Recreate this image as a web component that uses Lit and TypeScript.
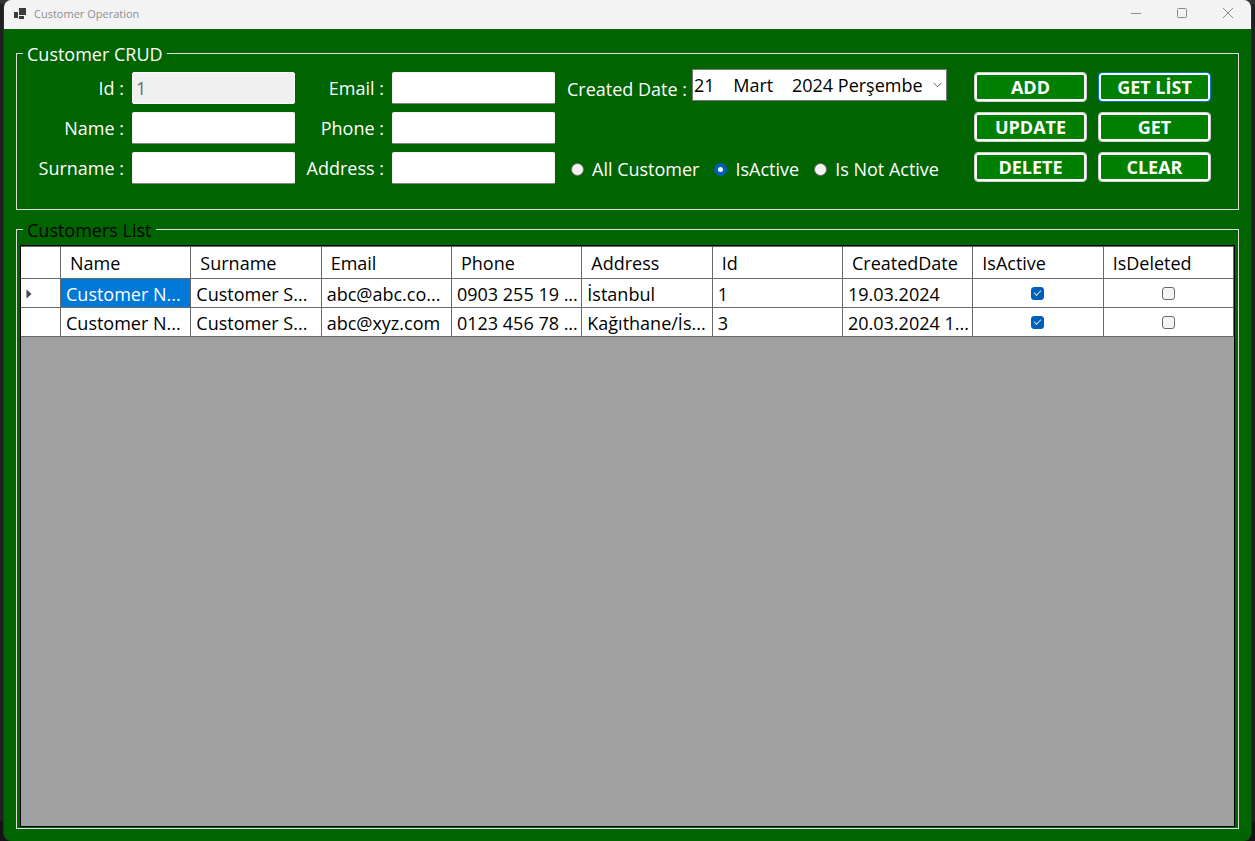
import { LitElement, html, css, svg } from "lit";
import { customElement, state } from "lit/decorators.js";

interface Customer {
  name: string;
  surname: string;
  email: string;
  phone: string;
  address: string;
  id: string;
  createdDate: string;
  isActive: boolean;
  isDeleted: boolean;
}

const TEXT_COLUMNS: Array<[keyof Customer, string]> = [
  ["name", "Name"],
  ["surname", "Surname"],
  ["email", "Email"],
  ["phone", "Phone"],
  ["address", "Address"],
  ["id", "Id"],
  ["createdDate", "CreatedDate"],
];

const FLAG_COLUMNS: Array<[keyof Customer, string]> = [
  ["isActive", "IsActive"],
  ["isDeleted", "IsDeleted"],
];

const CUSTOMERS: Customer[] = [
  {
    name: "Customer N...",
    surname: "Customer S...",
    email: "abc@abc.co...",
    phone: "0903 255 19 ...",
    address: "İstanbul",
    id: "1",
    createdDate: "19.03.2024",
    isActive: true,
    isDeleted: false,
  },
  {
    name: "Customer N...",
    surname: "Customer S...",
    email: "abc@xyz.com",
    phone: "0123 456 78 ...",
    address: "Kağıthane/İs...",
    id: "3",
    createdDate: "20.03.2024 1...",
    isActive: true,
    isDeleted: false,
  },
];

const ACTIONS = ["ADD", "GET LİST", "UPDATE", "GET", "DELETE", "CLEAR"];

const FIELDS = [
  { id: "id", label: "Id :", value: "1", disabled: true },
  { id: "email", label: "Email :", value: "", disabled: false },
  { id: "name", label: "Name :", value: "", disabled: false },
  { id: "phone", label: "Phone :", value: "", disabled: false },
  { id: "surname", label: "Surname :", value: "", disabled: false },
  { id: "address", label: "Address :", value: "", disabled: false },
];

const FILTERS = ["All Customer", "IsActive", "Is Not Active"];

@customElement("app-root")
export class AppRoot extends LitElement {
  @state() private filter = "IsActive";

  static styles = css`
    :host {
      display: block;
      font-family: "Open Sans", "Noto Sans", sans-serif;
      font-size: 18px;
      line-height: 24px;
      color: #fff;
    }
    * {
      box-sizing: border-box;
    }
    .desktop {
      min-height: 100vh;
      display: flex;
      padding: 0 3px;
      background: linear-gradient(#333 4px, #1f1f24 4px, #1f1f24 calc(100% - 20px), #141416 calc(100% - 20px));
    }
    .window {
      flex: 1;
      min-width: 0;
      display: flex;
      flex-direction: column;
      border: solid #2c2c2c;
      border-width: 0 1px;
      border-radius: 8px;
      overflow: hidden;
      background: #006400;
    }
    .titlebar {
      display: flex;
      align-items: center;
      height: 29px;
      padding: 0 13px 0 10px;
      gap: 8px;
      background: #f3f3f3;
      color: #8e8e8e;
      font-size: 11px;
      line-height: 26px;
    }
    .titlebar svg {
      display: block;
    }
    .title {
      flex: 1;
      margin: 0;
      font: inherit;
      padding-bottom: 2px;
    }
    .caption {
      display: flex;
      gap: 26px;
      padding-bottom: 3px;
    }
    .caption button {
      border: 0;
      padding: 0;
      background: none;
      width: 20px;
      height: 20px;
      display: grid;
      place-items: center;
    }
    .body {
      flex: 1;
      display: flex;
      flex-direction: column;
      gap: 7px;
      padding: 12px;
    }
    fieldset {
      margin: 0;
      min-width: 0;
      border: 1px solid #dcdcdc;
      padding: 0;
    }
    legend {
      margin-left: 6px;
      padding: 1px 4px 0;
      line-height: 24px;
    }
    .crud {
      display: flex;
      padding: 3px 27px 25px 0;
      align-items: flex-start;
    }
    .fields {
      flex: 1;
      display: grid;
      grid-template-columns: 107px minmax(0, 1fr) 81px minmax(0, 1fr);
      gap: 8px;
      align-items: center;
      padding-top: 3px;
    }
    .fields label {
      text-align: right;
      white-space: nowrap;
    }
    .fields input {
      width: 100%;
      height: 32px;
      padding: 0 3px;
      border: 1px solid #f4f4f4;
      border-bottom-color: #868686;
      border-radius: 2px;
      background: #fff;
      color: #000;
      font: inherit;
    }
    .fields input:disabled {
      background: #f0f0f0;
      border-color: #fbfbfb;
      color: #6d6d6d;
    }
    .middle {
      width: 380px;
      margin: 0 27px 0 12px;
      display: flex;
      flex-direction: column;
      gap: 56px;
    }
    .date {
      display: flex;
      align-items: flex-end;
      justify-content: space-between;
      white-space: nowrap;
    }
    .picker {
      display: grid;
      align-items: center;
      width: 255px;
    }
    .picker select,
    .picker svg {
      grid-area: 1 / 1;
    }
    .picker select {
      appearance: none;
      width: 100%;
      height: 32px;
      padding: 0 0 0 1px;
      border: 1px solid #7a7a7a;
      border-radius: 0;
      background: #fff;
      color: #000;
      font: inherit;
    }
    .picker svg {
      justify-self: end;
      margin-right: 5px;
      pointer-events: none;
    }
    .filters {
      display: flex;
      gap: 15px;
      padding-left: 4px;
      white-space: nowrap;
    }
    .filters label {
      display: flex;
      align-items: center;
      gap: 8px;
    }
    .filters input {
      appearance: none;
      width: 13px;
      height: 13px;
      margin: 0;
      border: 1px solid #6b6b6b;
      border-radius: 50%;
      background: #f3f3f3;
    }
    .filters input:checked {
      border: 4px solid #005fb8;
      background: #fff;
    }
    .actions {
      display: grid;
      grid-template-columns: 113px 113px;
      gap: 10px 11px;
      padding-top: 3px;
    }
    .actions button {
      height: 30px;
      padding: 0;
      border: 1px solid #d0d0d0;
      border-radius: 4px;
      background: #008000;
      box-shadow: inset 0 0 0 2px #fff;
      color: #fff;
      font: inherit;
      font-weight: 700;
      line-height: 28px;
    }
    .actions .focused {
      border-color: #0078d4;
    }
    .list {
      flex: 1;
      display: flex;
      padding: 3px;
      padding-bottom: 1px;
    }
    .list legend {
      margin-left: 3px;
      color: #000;
    }
    .grid {
      flex: 1;
      min-width: 0;
      border: 1px solid #000;
      background: #a0a0a0;
    }
    table {
      width: 100%;
      table-layout: fixed;
      border-collapse: separate;
      border-spacing: 0;
      border-top: 1px solid #696969;
      background: #fff;
      color: #000;
    }
    .selector {
      width: 40px;
    }
    th,
    td {
      height: 29px;
      padding: 2px 0 0 5px;
      border: solid #696969;
      border-width: 0 1px 1px 0;
      overflow: hidden;
      white-space: nowrap;
      text-align: left;
      font-weight: 400;
      line-height: 24px;
    }
    th {
      height: 32px;
      padding: 0 0 0 9px;
    }
    td.current {
      background: #0078d7;
      color: #fff;
    }
    td svg {
      display: block;
    }
    td.flag {
      padding: 0;
    }
    .flag input {
      appearance: none;
      display: grid;
      place-items: center;
      width: 13px;
      height: 13px;
      margin: 0 auto;
      border: 1px solid #6b6b6b;
      border-radius: 3px;
      background: #f3f3f3;
    }
    .flag input:checked {
      border-color: #005fb8;
      background: #005fb8;
    }
    .flag input:checked::after {
      content: "";
      width: 6px;
      height: 3px;
      border: solid #cfe0f0;
      border-width: 0 0 1px 1px;
      transform: translateY(-1px) rotate(-45deg);
    }
  `;

  private captionIcon(shape: unknown) {
    return html`<svg width="12" height="12" viewBox="0 0 12 12" fill="none" stroke="#8a8a8a">${shape}</svg>`;
  }

  render() {
    return html`
      <div class="desktop">
        <main class="window">
          <header class="titlebar">
            <svg width="12" height="14" viewBox="0 0 12 14" fill="#3c3c3c">
              <rect x="5" y="0" width="7" height="7" />
              <rect x="0" y="4" width="4" height="6" />
              <rect x="5" y="8" width="5" height="3" />
            </svg>
            <h1 class="title">Customer Operation</h1>
            <div class="caption">
              <button aria-label="Minimize">${this.captionIcon(svg`<path d="M1 6.5h10" />`)}</button>
              <button aria-label="Maximize">
                ${this.captionIcon(svg`<rect x="1.5" y="1.5" width="9" height="9" rx="1" />`)}
              </button>
              <button aria-label="Close">${this.captionIcon(svg`<path d="M1 1l10 10M11 1L1 11" />`)}</button>
            </div>
          </header>

          <div class="body">
            <fieldset>
              <legend>Customer CRUD</legend>
              <div class="crud">
                <div class="fields">
                  ${FIELDS.map(
                    (f) => html`
                      <label for=${f.id}>${f.label}</label>
                      <input id=${f.id} type="text" .value=${f.value} ?disabled=${f.disabled} />
                    `
                  )}
                </div>
                <div class="middle">
                  <div class="date">
                    <label for="created">Created Date :</label>
                    <div class="picker">
                      <select id="created">
                        <option>21&nbsp;&nbsp;&nbsp;&nbsp;Mart&nbsp;&nbsp;&nbsp;&nbsp;2024 Perşembe</option>
                      </select>
                      <svg width="9" height="6" viewBox="0 0 9 6" fill="none" stroke="#666">
                        <path d="M0.5 0.8l4 4l4-4" />
                      </svg>
                    </div>
                  </div>
                  <div class="filters">
                    ${FILTERS.map(
                      (name) => html`
                        <label>
                          <input
                            type="radio"
                            name="filter"
                            .checked=${this.filter === name}
                            @change=${() => (this.filter = name)}
                          />
                          ${name}
                        </label>
                      `
                    )}
                  </div>
                </div>
                <div class="actions">
                  ${ACTIONS.map(
                    (a) => html`<button type="button" class=${a === "GET LİST" ? "focused" : ""}>${a}</button>`
                  )}
                </div>
              </div>
            </fieldset>

            <fieldset class="list">
              <legend>Customers List</legend>
              <div class="grid">
                <table>
                  <thead>
                    <tr>
                      <th class="selector"></th>
                      ${[...TEXT_COLUMNS, ...FLAG_COLUMNS].map(([, title]) => html`<th scope="col">${title}</th>`)}
                    </tr>
                  </thead>
                  <tbody>
                    ${CUSTOMERS.map(
                      (c, row) => html`
                        <tr>
                          <td>
                            ${row === 0
                              ? html`<svg width="6" height="10" viewBox="0 0 6 10" fill="#444">
                                  <path d="M0.5 0.5L5.5 5L0.5 9.5z" />
                                </svg>`
                              : ""}
                          </td>
                          ${TEXT_COLUMNS.map(
                            ([key], col) => html`<td class=${row === 0 && col === 0 ? "current" : ""}>${c[key]}</td>`
                          )}
                          ${FLAG_COLUMNS.map(
                            ([key, title]) => html`<td class="flag">
                              <input type="checkbox" aria-label=${title} .checked=${c[key] as boolean} />
                            </td>`
                          )}
                        </tr>
                      `
                    )}
                  </tbody>
                </table>
              </div>
            </fieldset>
          </div>
        </main>
      </div>
    `;
  }
}
